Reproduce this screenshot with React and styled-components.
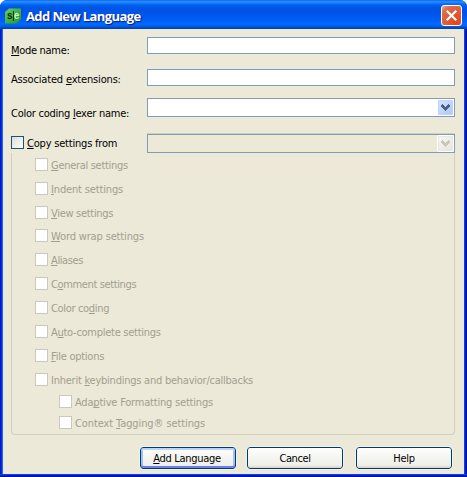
import React from "react";
import styled, { createGlobalStyle, css } from "styled-components";

const GlobalStyle = createGlobalStyle`
  * { box-sizing: border-box; }
  body { margin: 0; background: #fff; font-family: "DejaVu Sans Condensed", "DejaVu Sans", sans-serif; font-stretch: condensed; font-size: 11px; line-height: 13px; color: #000; }
`;

const Window = styled.div`
  width: 467px;
  height: 477px;
  display: flex;
  flex-direction: column;
  overflow: hidden;
  border-radius: 7px 7px 0 0;
  background: linear-gradient(90deg, #0019cf 0 1px, #0831d9 1px 2px, #166aee 2px 3px, #0855dd 3px 464px, #0841e6 464px 465px, #001dd0 465px 466px, #00138c 466px);
`;

const TitleBar = styled.header`
  height: 29px;
  flex: none;
  display: flex;
  align-items: center;
  padding: 2px 5px 0;
  background: linear-gradient(180deg, #0058ee 0, #2a86ff 1px, #288eff 2px, #127dff 3px, #036ffc 4px, #0262ee 5px, #0057e5 7px, #0054e3 10px, #0055eb 14px, #005bf5 19px, #026afe 24px, #0062ef 26px, #0052d6 27px, #0040ab 29px);
`;

const Title = styled.h1`
  margin: 1px auto 0 5px;
  font: 700 13px/20px "Open Sans", sans-serif;
  letter-spacing: -0.6px;
  color: #fff;
  text-shadow: 1px 1px 1px #0a1883;
  white-space: nowrap;
`;

const CloseButton = styled.button`
  width: 21px;
  height: 21px;
  padding: 0;
  display: grid;
  place-items: center;
  border: 1px solid #fff;
  border-radius: 3px;
  background: radial-gradient(circle at 75% 85%, #e2481a 0, #e2542c 35%, #dc6a4e 75%, #f0a694 100%);
`;

const Body = styled.main`
  flex: 1;
  margin: 0 3px;
  padding: 8px 9px 0 8px;
  background: #ece9d8;
`;

const Frame = styled.footer`
  height: 3px;
  flex: none;
  background: linear-gradient(180deg, #0841e6 0 1px, #001dd0 1px 2px, #00138c 2px);
`;

const FieldRow = styled.div`
  display: flex;
  align-items: flex-start;
  height: ${(p) => p.$height}px;
`;

const FieldLabel = styled.label`
  width: 136px;
  flex: none;
  display: flex;
  padding-top: ${(p) => p.$drop || 0}px;
`;

const Caption = styled.span`
  white-space: pre;
  letter-spacing: ${(p) => p.$track || 0}px;
`;

const Mnemonic = styled.span`
  text-decoration: underline;
  text-decoration-thickness: 1px;
  text-underline-offset: 1px;
  text-decoration-skip-ink: none;
`;

const TextInput = styled.input`
  width: 308px;
  height: 17px;
  padding: 0 3px;
  border: 1px solid #7f9db9;
  background: #fff;
`;

const Combo = styled.div`
  width: 308px;
  height: 19px;
  padding: 1px;
  display: flex;
  justify-content: flex-end;
  border: 1px solid #7f9db9;
  background: ${(p) => (p.$disabled ? "#ece9d8" : "#fff")};
  ${(p) => p.$disabled && css`box-shadow: 0 -1px 0 #d0d0bf;`}
`;

const ComboButton = styled.span`
  width: 15px;
  height: 15px;
  display: grid;
  place-items: center;
  border-radius: 1px;
  outline: ${(p) => (p.$disabled ? "1px solid #fff" : "none")};
  border: 1px solid ${(p) => (p.$disabled ? "#e8e8df" : "#c1d3fb")};
  background: ${(p) => (p.$disabled ? "linear-gradient(135deg, #f7f7f4, #e6e6dc)" : "linear-gradient(135deg, #d5e1ff, #aec8f7)")};
`;

const CheckBox = styled.span`
  width: 13px;
  height: 13px;
  flex: none;
  border: 1px solid ${(p) => (p.$disabled ? "#cac8bb" : "#1c5180")};
  background: ${(p) => (p.$disabled ? "#fff" : "linear-gradient(135deg, #dcdcd7, #fff)")};
`;

const CheckRow = styled.label`
  display: flex;
  gap: 3px;
  height: 13px;
  line-height: 15px;
  margin-left: ${(p) => (p.$nested ? 24 : 0)}px;
  margin-top: ${(p) => p.$gap}px;
  color: ${(p) => (p.$disabled ? "#a29e8f" : "#000")};
`;

const Group = styled.section`
  width: 444px;
  height: 282px;
  padding: 5px 0 0 23px;
  border: 1px solid #d0d0bf;
  border-top: 0;
  border-radius: 0 0 4px 4px;
`;

const Actions = styled.div`
  display: flex;
  gap: 11px;
  padding: 12px 0 0 129px;
`;

const PushButton = styled.button`
  width: 96px;
  height: 22px;
  padding: 1px 0 0;
  margin-left: ${(p) => p.$shift || 0}px;
  font: inherit;
  color: #000;
  border: 1px solid #003c74;
  border-radius: 3px;
  background: linear-gradient(180deg, #fff 0, #f6f6f2 40%, #f0f0ea 85%, #d6d0c5 100%);
  outline: 1px solid #f4f2e8;
  ${(p) => p.$primary && css`padding-right: 2px; box-shadow: inset 0 2px 0 #bcd4f6, inset 0 -2px 0 #6982ee, inset 2px 0 0 #a2bef2, inset -2px 0 0 #a2bef2;`}
`;

function Label({ text, track }) {
  const [before, key, after] = text.split("_");
  return (
    <Caption $track={track}>
      {before}
      {key && <Mnemonic>{key}</Mnemonic>}
      {after}
    </Caption>
  );
}

function AppIcon() {
  return (
    <svg width="16" height="16" viewBox="0 0 16 16">
      <defs>
        <linearGradient id="leaf" x1="0" y1="0" x2="1" y2="1">
          <stop offset="0" stopColor="#6fcb68" />
          <stop offset="0.5" stopColor="#3fb043" />
          <stop offset="1" stopColor="#1f9433" />
        </linearGradient>
      </defs>
      <path d="M4 0.5H16V11L11.5 15.5H0V4z" fill="url(#leaf)" />
      <text x="2" y="11" fontFamily="Liberation Sans" fontSize="10" fontWeight="700" fill="#08330c">s</text>
      <text x="8.8" y="11" fontFamily="Liberation Sans" fontSize="10" fontWeight="700" fill="#c4f5bd">e</text>
      <path d="M8.5 3v10" stroke="#08330c" />
    </svg>
  );
}

function Chevron({ color }) {
  return (
    <svg width="9" height="7" viewBox="0 0 9 7" shapeRendering="crispEdges">
      <path d="M1 0h1v1h1v1h1v1h1V2h1V1h1V0h1v1h1v2H8v1H7v1H6v1H5v1H4V6H3V5H2V4H1V3H0V1h1z" fill={color} />
    </svg>
  );
}

const settings = [
  { text: "_G_eneral settings", gap: 0, track: -0.3 },
  { text: "_I_ndent settings", gap: 11, track: -0.15 },
  { text: "_V_iew settings", gap: 11, track: -0.3 },
  { text: "_W_ord wrap settings", gap: 10, track: -0.15 },
  { text: "_A_liases", gap: 11, track: -0.4 },
  { text: "C_o_mment settings", gap: 11, track: -0.37 },
  { text: "Color co_d_ing", gap: 11, track: -0.33 },
  { text: "A_u_to-complete settings", gap: 11, track: -0.27 },
  { text: "_F_ile options", gap: 11, track: -0.25 },
  { text: "Inherit _k_eybindings and behavior/callbacks", gap: 11, track: -0.24 },
  { text: "Ada_p_tive Formatting settings", gap: 9, nested: true, track: -0.2 },
  { text: "Context _T_agging® settings", gap: 8, nested: true, track: -0.1 },
];

export default function App() {
  return (
    <>
      <GlobalStyle />
      <Window>
        <TitleBar>
          <AppIcon />
          <Title>Add New Language</Title>
          <CloseButton aria-label="Close">
            <svg width="13" height="13" viewBox="0 0 13 13">
              <path d="M1.7 1.7l9.6 9.6M11.3 1.7l-9.6 9.6" stroke="#fff" strokeWidth="2.2" />
            </svg>
          </CloseButton>
        </TitleBar>
        <Body>
          <FieldRow $height={32}>
            <FieldLabel $drop={7}><Label text="_M_ode name:" track={-0.3} /></FieldLabel>
            <TextInput />
          </FieldRow>
          <FieldRow $height={29}>
            <FieldLabel $drop={4}><Label text="Associated _e_xtensions:" track={-0.17} /></FieldLabel>
            <TextInput />
          </FieldRow>
          <FieldRow $height={36}>
            <FieldLabel $drop={9}><Label text="Color coding _l_exer name:" track={-0.25} /></FieldLabel>
            <Combo><ComboButton><Chevron color="#4d6185" /></ComboButton></Combo>
          </FieldRow>
          <FieldRow $height={19}>
            <FieldLabel as="div">
              <CheckRow $gap={2}><CheckBox /><Label text="_C_opy settings from" track={-0.2} /></CheckRow>
            </FieldLabel>
            <Combo $disabled><ComboButton $disabled><Chevron color="#c9c7ba" /></ComboButton></Combo>
          </FieldRow>
          <Group>
            {settings.map((s) => (
              <CheckRow key={s.text} $disabled $gap={s.gap} $nested={s.nested}>
                <CheckBox $disabled />
                <Label text={s.text} track={s.track} />
              </CheckRow>
            ))}
          </Group>
          <Actions>
            <PushButton $primary><Label text="_A_dd Language" track={-0.3} /></PushButton>
            <PushButton><Label text="Cancel" track={-0.4} /></PushButton>
            <PushButton $shift={2}><Label text="Help" track={-0.3} /></PushButton>
          </Actions>
        </Body>
        <Frame />
      </Window>
    </>
  );
}
